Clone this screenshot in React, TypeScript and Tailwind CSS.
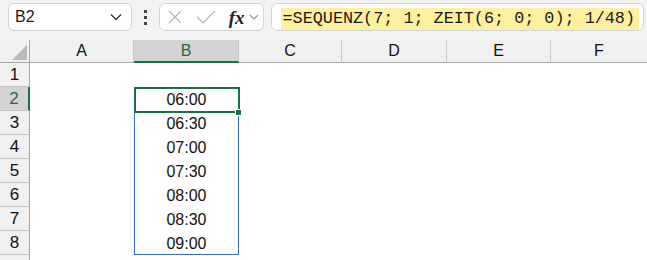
import React from 'react'

const COLS = ['A', 'B', 'C', 'D', 'E', 'F']
const ZEITEN = ['06:00', '06:30', '07:00', '07:30', '08:00', '08:30', '09:00']

function Chevron({ className }: { className?: string }) {
  return (
    <svg width="12" height="8" viewBox="0 0 12 8" className={className}>
      <path d="M1 1.5 L6 6.5 L11 1.5" fill="none" stroke="currentColor" strokeWidth="1.3" />
    </svg>
  )
}

export default function App() {
  return (
    <div className="w-[647px] h-[260px] overflow-hidden bg-white" style={{ fontFamily: '"Liberation Sans", Arial, sans-serif' }}>
      {/* Formelleiste */}
      <div className="h-[40px] bg-[#f3f3f3] flex items-start pt-[3px] pl-[8px] pr-[3px]">
        <div className="w-[125px] h-[28px] bg-white border border-[#d4d4d4] rounded-[6px] flex items-center justify-between pl-[6px] pr-[9px]">
          <span className="text-[16px] text-[#1b1b1b]">B2</span>
          <Chevron className="text-[#333]" />
        </div>
        <div className="w-[27px] h-[28px] flex flex-col items-center justify-center gap-[3px]">
          <span className="w-[3px] h-[3px] bg-[#444]" />
          <span className="w-[3px] h-[3px] bg-[#444]" />
          <span className="w-[3px] h-[3px] bg-[#444]" />
        </div>
        <div className="w-[105px] h-[28px] bg-white border border-[#d4d4d4] rounded-[6px] flex items-center pl-[8px] pr-[4px]">
          <svg width="14" height="14" viewBox="0 0 14 14" className="text-[#b4b4b4]">
            <path d="M1 1 L13 13 M13 1 L1 13" stroke="currentColor" strokeWidth="1.2" fill="none" />
          </svg>
          <svg width="20" height="14" viewBox="0 0 20 14" className="ml-[14px] text-[#b4b4b4]">
            <path d="M1 7 L7 13 L19 1" stroke="currentColor" strokeWidth="1.2" fill="none" />
          </svg>
          <span className="ml-[13px] text-[19px] italic font-semibold text-[#222] leading-none" style={{ fontFamily: '"Liberation Serif", "Times New Roman", serif' }}>fx</span>
          <Chevron className="ml-[4px] text-[#888] w-[10px]" />
        </div>
        <div className="flex-1 ml-[7px] h-[28px] bg-white border border-[#d4d4d4] rounded-[6px] flex items-center pl-[9px] pr-[4px]">
          <span className="bg-[#fff0a0] h-[22px] mt-[4px] flex items-center pl-[2px] pr-[4px] text-[16.8px] text-[#1b1b1b] whitespace-nowrap" style={{ fontFamily: '"Liberation Mono", "Courier New", monospace' }}>
            =SEQUENZ(7; 1; ZEIT(6; 0; 0); 1/48)
          </span>
        </div>
      </div>

      {/* Tabellenblatt */}
      <div className="grid grid-cols-[30px_104px_105px_103px_105px_104px_1fr] grid-rows-[23px_repeat(9,24px)]">
        <div className="bg-[#f0f0f0] border-r border-b border-[#a8a8a8] flex items-end justify-end p-[2px]">
          <svg width="15" height="15" viewBox="0 0 15 15">
            <path d="M15 0 L15 15 L0 15 Z" fill="#b9b9b9" />
          </svg>
        </div>
        {COLS.map(c => (
          <div key={c} className={`flex items-center justify-center text-[16px] border-b ${c === 'B' ? 'bg-[#d3d3d3] text-[#1e6b42] border-b-2 border-[#1e7145]' : 'bg-[#f0f0f0] text-[#111] border-[#a8a8a8]'} ${c !== 'F' ? 'border-r-[#c8c8c8] border-r' : ''}`}>
            {c}
          </div>
        ))}

        {Array.from({ length: 9 }, (_, i) => i + 1).map(r => (
          <div
            key={r}
            className={`col-start-1 flex items-center justify-center text-[17px] border-b border-b-[#c4c4c4] ${r === 2 ? 'bg-[#d3d3d3] text-[#1e6b42] border-r-2 border-r-[#1e7145]' : 'bg-[#f0f0f0] text-[#111] border-r border-r-[#a8a8a8]'}`}
            style={{ gridRowStart: r + 1 }}
          >
            {r < 9 ? r : ''}
          </div>
        ))}

        {/* Überlaufbereich B2:B8 */}
        <div className="col-start-3 row-start-3 row-span-7 relative border border-[#3b6fc6] flex flex-col">
          {ZEITEN.map(z => (
            <div key={z} className="h-[24px] shrink-0 flex items-center justify-center text-[16px] text-[#111]">
              {z}
            </div>
          ))}
          <div className="absolute left-[-1px] top-[-1px] w-[106px] h-[26px] border-2 border-[#1e7145]" />
          <div className="absolute left-[100px] top-[21px] w-[5px] h-[5px] bg-[#1e7145] border border-white box-content" />
        </div>
      </div>
    </div>
  )
}
